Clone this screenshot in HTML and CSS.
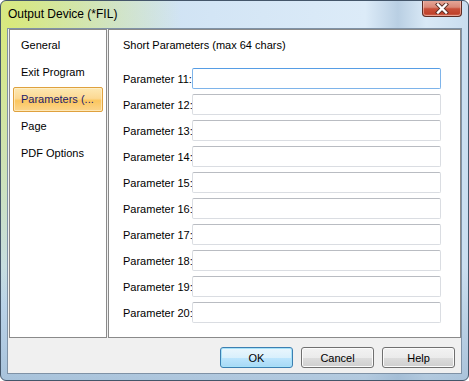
FILE: index.html
```html
<!DOCTYPE html>
<html lang="en">
<head>
  <meta charset="UTF-8"/>
  <title>Output Device (*FIL)</title>
  <link rel="stylesheet" href="styles.css">
</head>
<body>
  <div class="window">
    <div class="titlebar">
      <span class="title">Output Device (*FIL)</span>
      <div class="close">
        <svg width="16" height="11" viewBox="0 0 16 11">
          <path d="M4 1.5 L12 9.5 M12 1.5 L4 9.5" stroke="#5a3028" stroke-width="4.2" stroke-linecap="square"/>
          <path d="M4 1.5 L12 9.5 M12 1.5 L4 9.5" stroke="#ffffff" stroke-width="2.4" stroke-linecap="square"/>
        </svg>
      </div>
    </div>

    <div class="client">
      <div class="panes">
        <!-- Seitenliste -->
        <ul class="nav">
          <li>General</li>
          <li>Exit Program</li>
          <li class="active">Parameters (...</li>
          <li>Page</li>
          <li>PDF Options</li>
        </ul>

        <!-- Parameter-Seite -->
        <div class="page">
          <div class="heading">Short Parameters (max 64 chars)</div>
          <div class="row"><label>Parameter 11:</label><input class="focus"/></div>
          <div class="row"><label>Parameter 12:</label><input/></div>
          <div class="row"><label>Parameter 13:</label><input/></div>
          <div class="row"><label>Parameter 14:</label><input/></div>
          <div class="row"><label>Parameter 15:</label><input/></div>
          <div class="row"><label>Parameter 16:</label><input/></div>
          <div class="row"><label>Parameter 17:</label><input/></div>
          <div class="row"><label>Parameter 18:</label><input/></div>
          <div class="row"><label>Parameter 19:</label><input/></div>
          <div class="row"><label>Parameter 20:</label><input/></div>
        </div>
      </div>

      <div class="buttons">
        <button class="btn default">OK</button>
        <button class="btn">Cancel</button>
        <button class="btn">Help</button>
      </div>
    </div>
  </div>
</body>
</html>
```

FILE: styles.css
```css
body {
  margin: 0;
  background: #ffffff;
  font-family: "Liberation Sans", Arial, sans-serif;
  font-size: 11px;
  color: #000;
}

.window {
  width: 469px;
  height: 381px;
  box-sizing: border-box;
  border: 1px solid #44566a;
  border-radius: 6px;
  overflow: hidden;
  display: flex;
  flex-direction: column;
  background:
    radial-gradient(ellipse 170px 280px at 10px 25px, rgba(218, 234, 118, 0.95), rgba(218, 234, 118, 0) 100%),
    linear-gradient(180deg, rgba(255,255,255,0) 70%, rgba(150,178,205,0.6) 100%),
    linear-gradient(90deg, #c3dbef 0%, #d3e5f5 45%, #dcebf8 78%, #b9cfe3 85%, #d9e9f6 91%, #c9ddef 100%);
}

.titlebar {
  height: 27px;
  display: flex;
  justify-content: space-between;
  align-items: flex-start;
  padding: 0 6px 0 7px;
  flex-shrink: 0;
}
.title {
  font-size: 12px;
  line-height: 14px;
  margin-top: 6px;
  color: #000;
}
.close {
  width: 40px;
  height: 17px;
  margin-top: -1px;
  box-sizing: border-box;
  border: 1px solid #5c2c24;
  border-top: none;
  border-radius: 0 0 4px 4px;
  background: linear-gradient(#e6aa9c 0%, #d98877 45%, #c8503a 55%, #c0432c 85%, #d2705c 100%);
  box-shadow: inset 0 0 0 1px rgba(255, 220, 210, 0.5);
  display: flex;
  align-items: center;
  justify-content: center;
}

.client {
  flex: 1;
  margin: 0 6px 6px 6px;
  border: 1px solid #7f92a6;
  background: #f0f0f0;
  display: flex;
  flex-direction: column;
}

.panes {
  height: 309px;
  display: flex;
  gap: 1px;
  padding-left: 1px;
}

.nav {
  list-style: none;
  margin: 0;
  padding: 3px 3px 0;
  width: 98px;
  box-sizing: border-box;
  background: #fff;
  border: 1px solid #8a8a8a;
  display: flex;
  flex-direction: column;
  gap: 2px;
}
.nav li {
  height: 25px;
  box-sizing: border-box;
  line-height: 23px;
  padding-left: 7px;
  border: 1px solid transparent;
  border-radius: 2px;
  white-space: nowrap;
}
.nav li.active {
  color: #1c1c6a;
  border-color: #dfa13e;
  background: linear-gradient(#fde8b3 0%, #fcd993 45%, #fbc65f 55%, #fcd58c 100%);
  box-shadow: inset 0 0 0 1px rgba(255, 245, 215, 0.6);
}

.page {
  flex: 1;
  background: #fff;
  border: 1px solid #8a8a8a;
  padding: 8px 19px 0 14px;
}
.heading {
  line-height: 14px;
  margin-bottom: 16px;
}
.row {
  display: flex;
  align-items: center;
  height: 21px;
  margin-bottom: 5px;
}
.row label {
  width: 69px;
  flex-shrink: 0;
  white-space: nowrap;
}
.row input {
  flex: 1;
  height: 21px;
  box-sizing: border-box;
  margin: 0;
  padding: 2px;
  border: 1px solid #dadde2;
  border-top-color: #b9bcc2;
  border-radius: 2px;
  background: #fff;
  font: inherit;
}
.row input.focus {
  border-color: #7eb4ea;
  border-top-color: #569de5;
}

.buttons {
  display: flex;
  justify-content: flex-end;
  gap: 8px;
  padding: 9px 6px 0 0;
}
.btn {
  width: 73px;
  height: 21px;
  padding: 0;
  font-family: "Liberation Sans", Arial, sans-serif;
  font-size: 11px;
  font-weight: normal;
  color: #000;
  border: 1px solid #707070;
  border-radius: 3px;
  background: linear-gradient(#f2f2f2 0%, #ebebeb 50%, #dddddd 50%, #cfcfcf 100%);
  box-shadow: inset 0 0 0 1px #fbfbfb;
}
.btn.default {
  border-color: #3c7fb1;
  background: linear-gradient(#eaf6fd 0%, #d9f0fc 50%, #bee6fd 50%, #a7d9f5 100%);
  box-shadow: inset 0 0 0 1px #a6e2f9;
}
```
